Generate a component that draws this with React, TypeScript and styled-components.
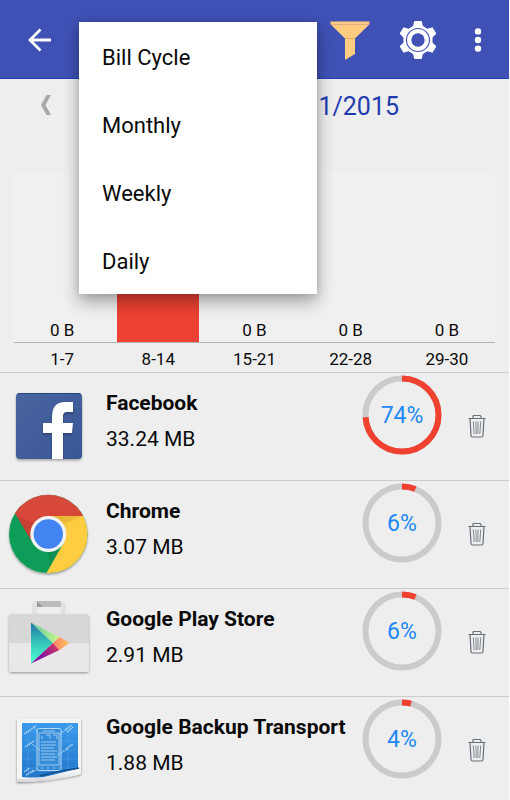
import React from "react";
import styled, { createGlobalStyle } from "styled-components";

const GlobalStyle = createGlobalStyle`
  * { box-sizing: border-box; }
  body { margin: 0; background: #eee; font-family: Roboto, "Liberation Sans", sans-serif; color: #0a0a0a; }
  button { border: 0; padding: 0; background: none; font: inherit; color: inherit; cursor: pointer; }
  svg { display: block; }
`;

const Screen = styled.div`
  display: flex;
  flex-direction: column;
  height: 100vh;
  border-right: 1px solid #fafafa;
  background: #eee;
`;

const Toolbar = styled.header`
  position: relative;
  z-index: 1;
  display: flex;
  flex: none;
  align-items: center;
  justify-content: space-between;
  height: 79px;
  padding: 1px 19px 0 20px;
  background: #3f51b5;
  border-bottom: 1px solid #1e3fb8;
`;

const Actions = styled.div`
  display: flex;
  align-items: center;
  gap: 28px;
`;

const IconButton = styled.button<{ $width?: number }>`
  display: flex;
  align-items: center;
  justify-content: center;
  width: ${({ $width = 40 }) => $width}px;
  height: 40px;
`;

const Menu = styled.div`
  position: absolute;
  top: 22px;
  left: 79px;
  display: flex;
  flex-direction: column;
  width: 238px;
  background: #fff;
  box-shadow: 0 8px 16px rgba(0, 0, 0, 0.32), 0 0 8px rgba(0, 0, 0, 0.12);
`;

const MenuItem = styled.button`
  height: 68px;
  padding: 2px 23px 0;
  text-align: left;
  font-size: 22px;
`;

const Period = styled.div`
  display: flex;
  flex: none;
  align-items: center;
  justify-content: space-between;
  height: 52px;
  padding: 0 110px 0 36px;
  font-size: 25px;
  color: #1f3cae;
`;

const PreviousButton = styled.button`
  width: 20px;
  height: 32px;
  display: flex;
  align-items: center;
  justify-content: center;
`;

const PeriodName = styled.span`
  padding-top: 2px;
`;

const Chart = styled.section`
  flex: none;
  margin-top: 41px;
  padding: 0 14px;
`;

const Plot = styled.div`
  display: grid;
  grid-template-columns: repeat(5, 1fr);
  height: 171px;
  background: #f0f0f0;
  border-bottom: 1px solid #b0b4b0;
`;

const Column = styled.div`
  display: flex;
  align-items: flex-end;
  justify-content: center;
  font-size: 17px;
  line-height: 24px;
`;

const Bar = styled.div`
  width: 82px;
  height: 150px;
  background: #ec4133;
`;

const Labels = styled.div`
  display: grid;
  grid-template-columns: repeat(5, 1fr);
  height: 29px;
  font-size: 17px;
  line-height: 32px;
  text-align: center;
`;

const List = styled.ul`
  flex: 1;
  min-height: 0;
  margin: 0;
  padding: 0;
  list-style: none;
  overflow-y: auto;
  scrollbar-width: none;
`;

const Row = styled.li`
  display: flex;
  height: 108px;
  border-top: 1px solid #cbcbcb;
`;

const AppIcon = styled.div`
  flex: none;
  width: 98px;
  padding: 3px 0 0 0;
`;

const Details = styled.div`
  flex: 1;
  padding: 12px 0 0 8px;
  white-space: nowrap;
  line-height: 36px;
  font-size: 21px;
`;

const Name = styled.div`
  font-weight: 700;
`;

const Gauge = styled.div`
  display: grid;
  flex: none;
  width: 80px;
  height: 80px;
  margin: 2px 22px 0 0;
  place-items: center;
  font-size: 23px;
  color: #2089f5;

  > * { grid-area: 1 / 1; }
`;

const DeleteButton = styled.button`
  display: flex;
  flex: none;
  align-items: center;
  justify-content: center;
  width: 26px;
  height: 36px;
  margin: 35px 19px 0 0;
`;

const BackIcon = () => (
  <svg width="40" height="40" viewBox="0 0 40 40" fill="none" stroke="#fff" strokeWidth="2.8">
    <path d="M31 20H10M20.500 9.500L10 20l10.500 10.500" />
  </svg>
);

const FunnelIcon = () => (
  <svg width="40" height="40" viewBox="0 0 40 40">
    <path d="M.5 1.500h39v2.700L25 18.500V34l-10 6V18.500L.5 4.200z" fill="#ffcc80" />
    <path d="M1 4.400h38M15 18.500h10" stroke="#d9ab80" fill="none" />
  </svg>
);

const GearIcon = () => (
  <svg width="40" height="40" viewBox="-20 -20 40 40">
    <g fill="#fff">
      <circle r="14.500" />
      {[0, 60, 120, 180, 240, 300].map((angle) => (
        <path
          key={angle}
          transform={`rotate(${angle})`}
          d="M-8.500-11.500Q-4.800-12.700-4.500-15.500L-4-18.300Q-3.800-19-3-19H3Q3.800-19 4-18.300L4.500-15.500Q4.800-12.700 8.500-11.500z"
        />
      ))}
    </g>
    <circle r="11.500" fill="none" stroke="#3f51b5" strokeWidth="1.100" />
    <circle r="6.700" fill="#3f51b5" />
  </svg>
);

const MoreIcon = () => (
  <svg width="8" height="28" viewBox="0 0 8 28" fill="#fff">
    <circle cx="4" cy="5.400" r="3.200" />
    <circle cx="4" cy="14" r="3.200" />
    <circle cx="4" cy="22.600" r="3.200" />
  </svg>
);

const PreviousIcon = () => (
  <svg width="10" height="20" viewBox="0 0 10 20" fill="#a9a9a9">
    <path d="M5.500 0H10L4.500 10 10 20H5.500L0 10z" />
  </svg>
);

const TrashIcon = () => (
  <svg width="18" height="24" viewBox="0 0 18 24" fill="none" stroke="#66707b">
    <path d="M.5 4.500h17M5 4V2.500q0-1 1-1h6q1 0 1 1V4M2 4.500l1 17q.1 1.500 1.500 1.500h9q1.400 0 1.500-1.500l1-17" strokeWidth="1.200" />
    <path d="M5.300 7.500l.9 12.500M7.900 7.500l.3 12.500M10.100 7.500l-.3 12.500M12.700 7.500l-.9 12.500" strokeWidth=".8" />
  </svg>
);

const FacebookIcon = () => (
  <svg width="98" height="100" viewBox="0 0 98 100">
    <defs>
      <linearGradient id="fb" x2="1" y2="1">
        <stop offset="0" stopColor="#49659f" />
        <stop offset="1" stopColor="#395796" />
      </linearGradient>
      <filter id="soft" x="-20%" y="-20%" width="140%" height="150%" colorInterpolationFilters="sRGB">
        <feDropShadow dx="0" dy="1.500" stdDeviation="1.300" floodOpacity="0.32" />
      </filter>
      <clipPath id="fbBox"><rect x="16" y="17" width="66" height="66" rx="4" /></clipPath>
    </defs>
    <rect x="16" y="17" width="66" height="66" rx="4" fill="url(#fb)" filter="url(#soft)" />
    <path d="M17 18.500q1-1 3-1h58q2 0 3 1" fill="none" stroke="#294985" />
    <g clipPath="url(#fbBox)">
      <path d="M52 84V57h-9V47h9v-6q0-15 13-15h8v10h-6q-4 0-4 4v7h10l-1 10h-9v27z" fill="#fff" filter="url(#soft)" />
    </g>
  </svg>
);

const ChromeIcon = () => (
  <svg width="98" height="100" viewBox="0 1 98 100">
    <defs>
      <clipPath id="chromeDisc"><circle cx="48.300" cy="51" r="39.300" /></clipPath>
      <linearGradient id="chromeRed" x2="0" y2="1"><stop stopColor="#d64b3c" /><stop offset="1" stopColor="#d94537" /></linearGradient>
      <linearGradient id="chromeGold" x2=".4" y2="1"><stop stopColor="#f3c03a" /><stop offset=".32" stopColor="#ffcd42" /></linearGradient>
      <filter id="discShadow" x="-20%" y="-20%" width="140%" height="150%">
        <feDropShadow dx="0" dy="1.500" stdDeviation="1.300" floodOpacity="0.35" />
      </filter>
    </defs>
    <circle cx="48.300" cy="51" r="39.300" fill="#119d59" filter="url(#discShadow)" />
    <g clipPath="url(#chromeDisc)">
      <path d="M15.500 31L0 0h98v33H48.300L31 57z" fill="url(#chromeRed)" />
      <path d="M48.300 33H98v70H39L63.500 60z" fill="url(#chromeGold)" />
      <path d="M17 33l14 24q-2-9 4-16z" fill="#b5382d" opacity=".5" />
      <path d="M49 33h32L64 41z" fill="#b98a22" opacity=".25" />
      <path d="M62 62L47 89q5-11 0-19z" fill="#0a7d48" opacity=".4" />
    </g>
    <circle cx="48.300" cy="51" r="18" fill="#f2f3f2" />
    <circle cx="48.300" cy="51" r="14.700" fill="#4384f3" />
  </svg>
);

const PlayStoreIcon = () => (
  <svg width="98" height="100" viewBox="0 0 98 100">
    <defs>
      <linearGradient id="playTeal" x2="0" y2="1"><stop stopColor="#216fa3" /><stop offset=".5" stopColor="#36c7ba" /><stop offset="1" stopColor="#51ffd0" /></linearGradient>
      <linearGradient id="playLime"><stop stopColor="#5cc9a0" /><stop offset="1" stopColor="#ccf78e" /></linearGradient>
      <linearGradient id="playPink" x2="1" y2="-.6"><stop stopColor="#8413a0" /><stop offset=".7" stopColor="#df3e59" /></linearGradient>
      <linearGradient id="playOrange"><stop stopColor="#fc806a" /><stop offset="1" stopColor="#ffc35e" /></linearGradient>
      <filter id="bagShadow" x="-20%" y="-20%" width="140%" height="150%">
        <feDropShadow dx="0" dy="1.200" stdDeviation=".8" floodOpacity="0.35" />
      </filter>
    </defs>
    <path d="M32 22V14q0-5 5-5h24q5 0 5 5v8h-5V14H37v8z" fill="#e2e2e2" />
    <path d="M37 9h24v6H37z" fill="#bdbdbd" />
    <path d="M37 9l6 6h-6z" fill="#9c9c9c" />
    <rect x="9" y="22" width="80" height="58" rx="3" fill="#e8e8e8" filter="url(#bagShadow)" />
    <path d="M9 51V25q0-3 3-3h74q3 0 3 3v26z" fill="#d7d7d7" />
    <path d="M31 30.500v41L53 51z" fill="url(#playTeal)" />
    <path d="M31 30.500L59.500 45 53 51z" fill="url(#playLime)" />
    <path d="M31 71.500L59.500 58 53 51z" fill="url(#playPink)" />
    <path d="M59.500 45L69.500 51 59.500 58 53 51z" fill="url(#playOrange)" />
  </svg>
);

const BackupIcon = () => (
  <svg width="98" height="100" viewBox="0 0 98 100">
    <defs>
      <linearGradient id="blueprint" x2="0" y2="1"><stop stopColor="#3b9aeb" /><stop offset="1" stopColor="#2277ca" /></linearGradient>
      <linearGradient id="curl" x2="0" y2="1"><stop stopColor="#fff" /><stop offset="1" stopColor="#d4d6d8" /></linearGradient>
      <filter id="paperShadow" x="-20%" y="-20%" width="140%" height="150%">
        <feDropShadow dx="0" dy="1.200" stdDeviation="1" floodOpacity="0.45" />
      </filter>
    </defs>
    <path d="M17 20q0-1.500 2-1.500h60q2 0 2 2V74q-14 3-28 5-17 3-36 3z" fill="#f3f4f4" filter="url(#paperShadow)" />
    <path d="M22 23h56v46Q56 74 44 77q-12 1-22 0z" fill="url(#blueprint)" />
    <path d="M22 32h56M22 41h56M22 50h56M22 59h56M22 68h56M28 23v54M50 23v54M59 23v50M68 23v48" stroke="#66b7ef" strokeWidth=".5" opacity=".6" />
    <g fill="none" stroke="#b6d9f5">
      <rect x="37" y="28.500" width="24" height="42" rx="2" fill="#348cd9" />
      <path d="M39 33h20v32H39zM43 31h12M42 36v3M46 35h4v4M53 35h4v4M41 42h15M41 45h15M41 48h13M41 51h16M41 54h14M41 57h16M41 60h14M41 68h2M47 68h2M53 68h2M58 68h1" strokeWidth=".8" />
      <path d="M33 26l5 6M32 44l8 6M68 28l-9 7M68 49l-11 6M31 73l7-4" strokeWidth=".7" />
      <path d="M24 34l12-8M25 47l9-6M65 30l7-5M67 32l6-5M66 49l7-5M24 72l6-4M26 75l8-5" strokeWidth="1.500" strokeDasharray="1.500 .7" />
    </g>
    <path d="M40 76q18-5 39-8" fill="none" stroke="#174d83" strokeWidth="1.500" />
    <path d="M17 79q21 0 38-4 13-4 25-6l-1 6q-18 4-33 6-16 1-29 1z" fill="url(#curl)" />
  </svg>
);

const buckets = [
  { range: "1-7", empty: true },
  { range: "8-14", empty: false },
  { range: "15-21", empty: true },
  { range: "22-28", empty: true },
  { range: "29-30", empty: true },
];

const apps = [
  { name: "Facebook", size: "33.24 MB", percent: 74, Icon: FacebookIcon },
  { name: "Chrome", size: "3.07 MB", percent: 6, Icon: ChromeIcon },
  { name: "Google Play Store", size: "2.91 MB", percent: 6, Icon: PlayStoreIcon },
  { name: "Google Backup Transport", size: "1.88 MB", percent: 4, Icon: BackupIcon },
];

function UsageGauge({ percent }: { percent: number }) {
  return (
    <Gauge>
      <svg width="80" height="80" viewBox="0 0 80 80" fill="none" strokeWidth="6">
        <circle cx="40" cy="40" r="36.500" stroke="#cbcbcb" />
        <circle cx="40" cy="40" r="36.500" stroke="#ef4030" pathLength="100" strokeDasharray={`${percent} 100`} transform="rotate(-90 40 40)" />
      </svg>
      <span>{percent}%</span>
    </Gauge>
  );
}

export default function App() {
  return (
    <Screen>
      <GlobalStyle />
      <Toolbar>
        <IconButton aria-label="Back"><BackIcon /></IconButton>
        <Actions>
          <IconButton aria-label="Filter"><FunnelIcon /></IconButton>
          <IconButton aria-label="Settings"><GearIcon /></IconButton>
          <IconButton $width={24} aria-label="More options"><MoreIcon /></IconButton>
        </Actions>
        <Menu role="menu">
          {["Bill Cycle", "Monthly", "Weekly", "Daily"].map((label) => (
            <MenuItem key={label} role="menuitem">{label}</MenuItem>
          ))}
        </Menu>
      </Toolbar>
      <Period>
        <PreviousButton aria-label="Previous period"><PreviousIcon /></PreviousButton>
        <PeriodName>11/2015</PeriodName>
      </Period>
      <Chart>
        <Plot>
          {buckets.map(({ range, empty }) => (
            <Column key={range}>{empty ? "0 B" : <Bar />}</Column>
          ))}
        </Plot>
        <Labels>
          {buckets.map(({ range }) => <span key={range}>{range}</span>)}
        </Labels>
      </Chart>
      <List>
        {apps.map(({ name, size, percent, Icon }) => (
          <Row key={name}>
            <AppIcon><Icon /></AppIcon>
            <Details>
              <Name>{name}</Name>
              <div>{size}</div>
            </Details>
            <UsageGauge percent={percent} />
            <DeleteButton aria-label={`Delete ${name}`}><TrashIcon /></DeleteButton>
          </Row>
        ))}
      </List>
    </Screen>
  );
}
